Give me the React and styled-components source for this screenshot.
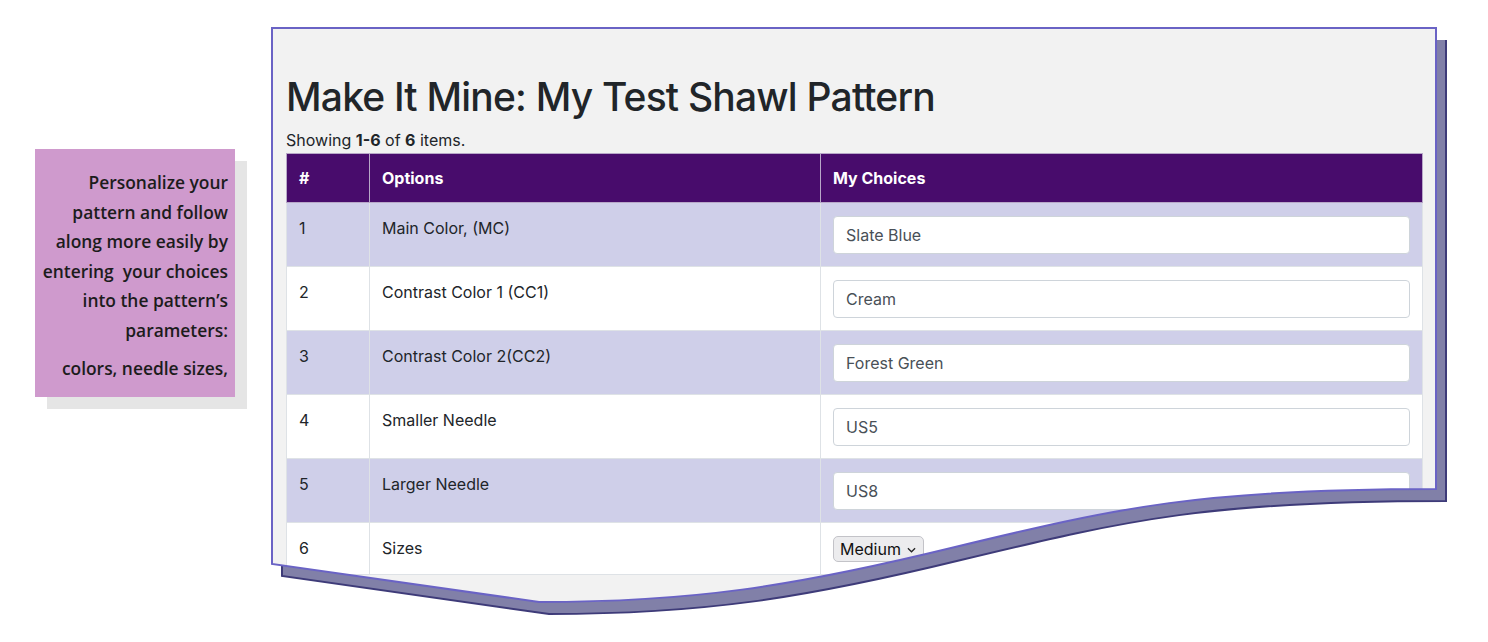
import React from "react"
import styled, { createGlobalStyle } from "styled-components"

const GlobalStyle = createGlobalStyle`
  body {
    margin: 0;
    background: #fff;
    font-family: Inter, "Liberation Sans", sans-serif;
  }
`

const CARD_OUTLINE =
  "M1,1 H1165 V462 C930,462 850,480 680,521 C520,560 420,575 268,575 L1,537 Z"
const SHADOW_FILL =
  "M11,13 H1175 V474 C940,474 860,492 690,533 C530,572 430,587 278,587 L11,549 Z"
const SHADOW_EDGE =
  "M1175,13 V474 C940,474 860,492 690,533 C530,572 430,587 278,587 L11,549 V537"

const rows = [
  { id: 1, option: "Main Color, (MC)", choice: "Slate Blue" },
  { id: 2, option: "Contrast Color 1 (CC1)", choice: "Cream" },
  { id: 3, option: "Contrast Color 2(CC2)", choice: "Forest Green" },
  { id: 4, option: "Smaller Needle", choice: "US5" },
  { id: 5, option: "Larger Needle", choice: "US8" },
]

const App = () => {
  return (
    <Stage>
      <GlobalStyle />
      <Callout>
        <CalloutText>
          Personalize your
          <br />
          pattern and follow
          <br />
          along more easily by
          <br />
          entering&nbsp; your choices
          <br />
          into the pattern’s
          <br />
          parameters:
        </CalloutText>
        <CalloutText $gap>colors, needle sizes,</CalloutText>
      </Callout>

      <Sheet>
        <Decor width="1190" height="600" $layer={0}>
          <path d={SHADOW_FILL} fill="#8180a8" />
          <path d={SHADOW_EDGE} fill="none" stroke="#3e3b79" strokeWidth="2" />
        </Decor>

        <Card>
          <Title>Make It Mine: My Test Shawl Pattern</Title>
          <Summary>
            Showing <b>1-6</b> of <b>6</b> items.
          </Summary>
          <Table>
            <colgroup>
              <col style={{ width: 83 }} />
              <col style={{ width: 451 }} />
              <col style={{ width: 602 }} />
            </colgroup>
            <thead>
              <tr>
                <Th>#</Th>
                <Th>Options</Th>
                <Th>My Choices</Th>
              </tr>
            </thead>
            <tbody>
              {rows.map((row, index) => (
                <Row key={row.id} $striped={index % 2 === 0}>
                  <Td>{row.id}</Td>
                  <Td>{row.option}</Td>
                  <Td>
                    <TextInput defaultValue={row.choice} />
                  </Td>
                </Row>
              ))}
              <Row $striped={false}>
                <Td>6</Td>
                <Td>Sizes</Td>
                <Td>
                  <SelectWrap>
                    <Select defaultValue="Medium">
                      <option>Small</option>
                      <option>Medium</option>
                      <option>Large</option>
                    </Select>
                    <Chevron viewBox="0 0 10 6" width="9" height="6">
                      <path d="M1 1 L5 5 L9 1" fill="none" stroke="#222" strokeWidth="1.4" />
                    </Chevron>
                  </SelectWrap>
                </Td>
              </Row>
            </tbody>
          </Table>
        </Card>

        <Decor width="1190" height="600" $layer={2}>
          <path d={CARD_OUTLINE} fill="none" stroke="#6a63c5" strokeWidth="2" />
        </Decor>
      </Sheet>
    </Stage>
  )
}

export default App

const Stage = styled.div`
  display: flex;
  align-items: flex-start;
  width: 1488px;
  height: 642px;
  box-sizing: border-box;
  padding: 27px 0 0 35px;
  overflow: hidden;
`

const Callout = styled.div`
  width: 200px;
  height: 248px;
  box-sizing: border-box;
  margin-top: 122px;
  padding: 19px 7px 0 0;
  background: #cf9acd;
  box-shadow: 12px 12px 0 #e5e5e5;
  text-align: right;
  font-family: "Open Sans", Lato, sans-serif;
  font-weight: 600;
  font-size: 17.4px;
  color: #1c1c1c;
  white-space: nowrap;
`

const CalloutText = styled.p`
  margin: ${(p) => (p.$gap ? "9px 0 0" : "0")};
  line-height: 29.5px;
`

const Sheet = styled.div`
  position: relative;
  width: 1166px;
  height: 600px;
  margin-left: 36px;
`

const Decor = styled.svg`
  position: absolute;
  left: 0;
  top: 0;
  overflow: visible;
  pointer-events: none;
  z-index: ${(p) => p.$layer};
`

const Card = styled.div`
  position: relative;
  z-index: 1;
  width: 1166px;
  height: 577px;
  box-sizing: border-box;
  padding: 46px 15px 0;
  background: #f2f2f2;
  clip-path: path("${CARD_OUTLINE}");
  color: #212529;
`

const Title = styled.h1`
  margin: 0 0 7px;
  font-size: 39px;
  line-height: 48px;
  font-weight: 500;
  letter-spacing: -0.8px;
  color: #212529;
`

const Summary = styled.div`
  font-size: 16px;
  line-height: 24px;
  margin-bottom: 1px;
  b {
    font-weight: 700;
  }
`

const Table = styled.table`
  width: 1136px;
  table-layout: fixed;
  border-collapse: collapse;
  font-size: 16px;
  line-height: 24px;
`

const Th = styled.th`
  padding: 12px;
  text-align: left;
  font-weight: 700;
  color: #fff;
  background: #480c6c;
  border: 1px solid #b8a8c8;
`

const Row = styled.tr`
  background: ${(p) => (p.$striped ? "#cfcfe9" : "#fff")};
`

const Td = styled.td`
  padding: 13px 12px 12px;
  vertical-align: top;
  border: 1px solid #dee2e6;
  color: #212529;
`

const TextInput = styled.input`
  display: block;
  width: 100%;
  height: 38px;
  box-sizing: border-box;
  padding: 6px 12px;
  border: 1px solid #ced4da;
  border-radius: 4px;
  background: #fff;
  font-family: inherit;
  font-size: 16px;
  color: #495057;
`

const SelectWrap = styled.span`
  position: relative;
  display: inline-block;
`

const Select = styled.select`
  appearance: none;
  height: 26px;
  padding: 0 22px 0 6px;
  border: 1px solid #c3c3c8;
  border-radius: 5px;
  background: #ececee;
  font-family: inherit;
  font-size: 16px;
  color: #111;
`

const Chevron = styled.svg`
  position: absolute;
  right: 8px;
  top: 11px;
  pointer-events: none;
`
